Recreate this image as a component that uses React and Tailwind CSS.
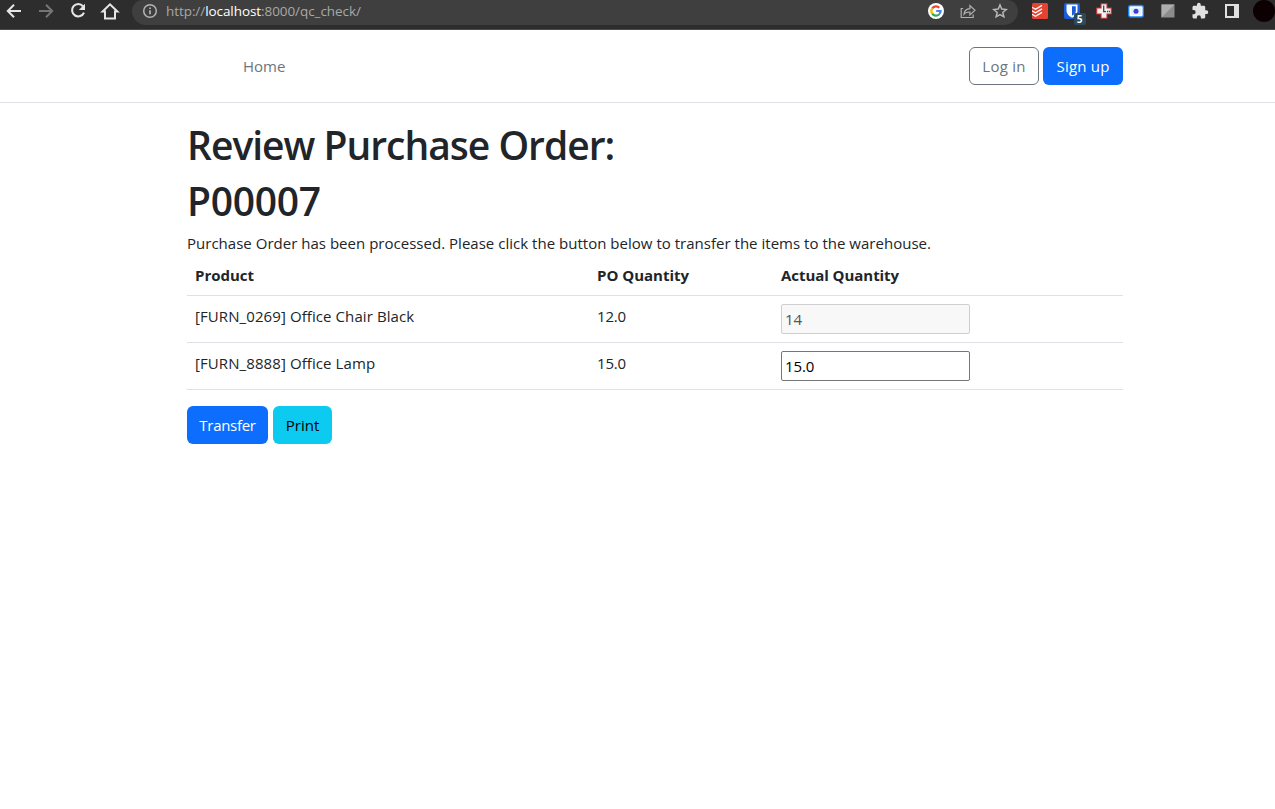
import React from "react";

const body = "font-['Open_Sans',sans-serif] text-[15px] leading-6";

function Toolbar() {
  return (
    <div className="flex h-[30px] items-start border-b border-[#4a4a4a] bg-[#2d2d2d]">
      <div className="flex h-[22px] w-[132px] shrink-0 items-center gap-3 pl-1">
        <svg className="size-5 shrink-0" viewBox="0 0 20 20" fill="none" stroke="#e6e6e6" strokeWidth="2">
          <path d="M17 10H4.5M10 3.8 3.8 10l6.2 6.2" />
        </svg>
        <svg className="size-5 shrink-0" viewBox="0 0 20 20" fill="none" stroke="#757575" strokeWidth="2">
          <path d="M3 10h12.5M10 3.8l6.2 6.2-6.2 6.2" />
        </svg>
        <svg className="size-5 shrink-0" viewBox="0 0 20 20" fill="none" stroke="#e6e6e6" strokeWidth="2.1">
          <path d="M15 5.2A6.2 6.2 0 1 0 16 11.6" />
          <path d="M17 2.8V9h-6.2z" fill="#e6e6e6" stroke="none" />
        </svg>
        <svg className="size-5 shrink-0" viewBox="0 0 20 20" fill="none" stroke="#e6e6e6" strokeWidth="2">
          <path d="M2.6 10.6H5v7h10v-7h2.4L10 3.4z" />
        </svg>
      </div>
      <div className="flex h-[25px] w-[886px] shrink-0 items-start rounded-b-[14px] rounded-t-[11px] bg-[#3f3f3f] px-[10px]">
        <div className="flex h-[22px] flex-1 items-center">
          <svg className="size-4 shrink-0" viewBox="0 0 16 16" fill="none" stroke="#b4b4b4" strokeWidth="1.5">
            <circle cx="8" cy="8" r="6.3" />
            <path d="M8 7.2v4M8 4.4v1.6" strokeWidth="1.7" />
          </svg>
          <div className="ml-2 whitespace-nowrap text-[13.5px] leading-5 tracking-[-0.07px] text-[#a8a8a8]">
            http://<span className="text-white">localhost</span>:8000/qc_check/
          </div>
        </div>
        <div className="flex h-[22px] items-center gap-4">
          <svg className="size-4" viewBox="0 0 16 16">
            <circle cx="8" cy="8" r="8" fill="#fff" />
            <g fill="none" strokeWidth="2.2">
              <path d="M4.2 5.4A4.6 4.6 0 0 1 11.3 4.8" stroke="#ea4335" />
              <path d="M4.2 10.6A4.7 4.7 0 0 1 4.2 5.4" stroke="#fbbc05" />
              <path d="M11 11.5A4.6 4.6 0 0 1 4.2 10.6" stroke="#34a853" />
              <path d="M8.2 8h4.4A4.6 4.6 0 0 1 11 11.5" stroke="#4285f4" />
            </g>
          </svg>
          <svg className="size-4" viewBox="0 0 16 16" fill="none" stroke="#b0b0b0" strokeWidth="1.2">
            <path d="M3.2 5.5h-2v9h12v-3" />
            <path d="M4 11.2c.3-3.500 2.300-5.400 5.900-5.600V2.600L15 7.300l-5.100 4.700V9C7.300 8.900 5.400 9.600 4 11.200z" />
          </svg>
          <svg className="size-4" viewBox="0 0 16 16" fill="none" stroke="#b8b8b8" strokeWidth="1.5">
            <path d="m8 2 1.750 4.100 4.450.4-3.400 2.950 1.050 4.350L8 11.500l-3.850 2.300 1.050-4.350L1.800 6.500l4.450-.4z" />
          </svg>
        </div>
      </div>
      <div className="flex h-[22px] flex-1 items-center gap-4 pl-[13.5px]">
        <svg className="size-4 shrink-0" viewBox="0 0 16 16">
          <rect width="16" height="16" rx="1.5" fill="#e44332" />
          <path d="m0 4.200 3.500 2L10 2.400M0 7.700l3.500 2L10 5.900M0 11.200l3.500 2L10 9.400" fill="none" stroke="#fff" strokeWidth="1.3" />
        </svg>
        <div className="relative size-4 shrink-0">
          <svg className="size-4" viewBox="0 0 16 16">
            <rect width="16" height="16" rx="2" fill="#175ddc" />
            <path d="M2.500 1.500h11V8c0 3-2.500 5.200-5.500 6.800C5 13.200 2.500 11 2.500 8z" fill="#fff" />
            <path d="M8 3.300h3.800V8c0 2-1.700 3.600-3.800 4.800z" fill="#175ddc" />
          </svg>
          <span className="absolute left-[10px] top-[10px] flex h-3 w-3 items-center justify-center rounded-[2px] bg-[#2b4a5c] text-[10px] font-bold leading-3 text-white">5</span>
        </div>
        <svg className="size-4 shrink-0" viewBox="0 0 16 16">
          <path d="M5 .7h6V5h4.300v6H11v4.300H5V11H.7V5H5z" fill="#f0f0f0" stroke="#c9302f" strokeWidth="1.1" />
          <path d="M7.700 2.500v6.100H10M11 8.500h1.300M13 8.500h1" fill="none" stroke="#444" strokeWidth="1.3" />
        </svg>
        <svg className="size-4 shrink-0" viewBox="0 0 16 16">
          <rect x=".7" y="2.500" width="14.600" height="11.500" rx="2" fill="#fff" stroke="#1a84f5" strokeWidth="1.4" />
          <rect x="3" y="4.800" width="10" height="7" rx=".8" fill="#e4edff" />
          <circle cx="8" cy="8.200" r="2.500" fill="#3d3fc8" />
        </svg>
        <svg className="size-4 shrink-0" viewBox="0 0 16 16">
          <path d="M1.500 1.500h13v13h-13z" fill="#8c8c8c" />
          <path d="M1.500 14.500v-13h13z" fill="#adadad" />
        </svg>
        <svg className="-mx-px size-[18px] shrink-0" viewBox="0 0 24 24" fill="#e0e0e0">
          <path d="M20.500 11H19V7c0-1.100-.9-2-2-2h-4V3.500a2.500 2.500 0 0 0-5 0V5H4c-1.100 0-2 .9-2 2v3.800h1.500a2.700 2.700 0 0 1 0 5.400H2V20c0 1.100.9 2 2 2h3.800v-1.500a2.700 2.700 0 0 1 5.400 0V22H17c1.100 0 2-.9 2-2v-4h1.500a2.500 2.500 0 0 0 0-5z" />
        </svg>
        <svg className="size-4 shrink-0" viewBox="0 0 16 16">
          <path d="M1 1h14v14H1zM3 3v10h7V3z" fill="#e0e0e0" fillRule="evenodd" />
        </svg>
        <div className="-ml-[3px] size-[22px] shrink-0 rounded-full bg-[#0d0002]" />
      </div>
    </div>
  );
}

const rows = [
  { product: "[FURN_0269] Office Chair Black", quantity: "12.0", actual: "14", disabled: true },
  { product: "[FURN_8888] Office Lamp", quantity: "15.0", actual: "15.0", disabled: false },
];

const columns = "grid grid-cols-[402px_184px_350px] border-b border-[#dee2e6]";

export default function App() {
  return (
    <div className={"h-[809px] overflow-hidden bg-white text-[#212529] " + body}>
      <Toolbar />
      <header className="flex h-[73px] items-center border-b border-[#dee2e6] px-[152px]">
        <a className="ml-[91px] text-[#6c757d]">Home</a>
        <div className="ml-auto flex gap-1">
          <button className="h-[38px] w-[70px] rounded-md border border-[#6c757d] text-[#6c757d]">
            <span className="tracking-[0.25px]">Log in</span>
          </button>
          <button className="h-[38px] w-20 rounded-md bg-[#0d6efd] text-white">
            <span className="tracking-[0.2px]">Sign up</span>
          </button>
        </div>
      </header>
      <main className="ml-[187px] w-[936px] pt-[18px]">
        <h1 className="mb-2 whitespace-nowrap text-[39px] font-semibold leading-[48px] tracking-[-1px]">
          Review Purchase Order:
        </h1>
        <h1 className="mb-1.5 text-[39px] font-semibold leading-[48px] tracking-[-0.3px]">P00007</h1>
        <p className="whitespace-nowrap tracking-[0.02px]">
          Purchase Order has been processed. Please click the button below to transfer the items to the warehouse.
        </p>
        <div className="mb-4">
          <div className={columns + " h-[41px] font-bold"}>
            <div className="p-2">Product</div>
            <div className="p-2">PO Quantity</div>
            <div className="p-2 tracking-[-0.05px]">Actual Quantity</div>
          </div>
          {rows.map((row) => (
            <div key={row.product} className={columns + " h-[47px]"}>
              <div className="p-2 tracking-[0.09px]">{row.product}</div>
              <div className="p-2 tracking-[-0.2px]">{row.quantity}</div>
              <div className="p-2">
                <input
                  defaultValue={row.actual}
                  disabled={row.disabled}
                  className="block h-[30px] w-[189px] rounded-[2px] border border-[#767676] bg-white px-[3px] tracking-[-0.1px] text-black disabled:border-[#cfcfcf] disabled:bg-[#f8f8f8] disabled:text-[#545454]"
                />
              </div>
            </div>
          ))}
        </div>
        <div className="flex gap-[5px]">
          <button className="h-[38px] w-[81px] rounded-md bg-[#0d6efd] text-white">
            <span className="tracking-[-0.3px]">Transfer</span>
          </button>
          <button className="h-[38px] w-[59px] rounded-md bg-[#0dcaf0] text-black">Print</button>
        </div>
      </main>
    </div>
  );
}
